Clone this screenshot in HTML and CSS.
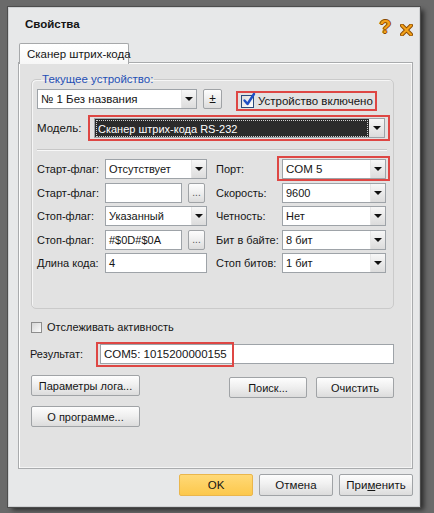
FILE: index.html
```html
<!DOCTYPE html>
<html lang="ru">
<head>
<meta charset="utf-8">
<title>Свойства</title>
<link rel="stylesheet" href="styles.css">
</head>
<body>
<div class="dialog">
  <div class="titlebar">
    <span class="title">Свойства</span>
    <span class="tools">
      <span class="help">?</span>
      <svg class="close" width="13" height="12" viewBox="0 0 13 12">
        <path d="M2 1.5 L11 10.5 M11 1.5 L2 10.5" stroke="#8a4a00" stroke-width="4" stroke-linecap="round"/>
        <path d="M2 1.5 L11 10.5 M11 1.5 L2 10.5" stroke="#f2a11a" stroke-width="2.2" stroke-linecap="round"/>
      </svg>
    </span>
  </div>

  <div class="tabs"><div class="tab">Сканер штрих-кода</div></div>

  <div class="panel">
    <fieldset class="device">
      <legend>Текущее устройство:</legend>

      <div class="row first">
        <div class="combo w-device"><span class="val">№ 1 Без названия</span><span class="arrow"></span></div>
        <button class="btn pm">±</button>
        <label class="check mark-box">
          <span class="box">
            <svg width="16" height="16" viewBox="0 0 16 16"><path d="M3.5 8.5 L6.5 12 L13 2" fill="none" stroke="#1f4fc4" stroke-width="2.4" stroke-linecap="round" stroke-linejoin="round"/></svg>
          </span>
          Устройство включено
        </label>
      </div>

      <div class="row model-row">
        <span class="lbl model-lbl">Модель:</span>
        <div class="mark-box model-mark">
          <div class="combo dark"><span class="val"><span class="focus">Сканер штрих-кода RS-232</span></span><span class="arrow"></span></div>
        </div>
      </div>

      <hr class="sep">

      <div class="grid">
        <span class="lbl">Старт-флаг:</span>
        <div class="combo"><span class="val">Отсутствует</span><span class="arrow"></span></div>
        <span class="lbl">Порт:</span>
        <div class="combo marked"><span class="val">COM 5</span><span class="arrow"></span></div>

        <span class="lbl">Старт-флаг:</span>
        <div class="pick"><span class="input"></span><button class="btn dots">...</button></div>
        <span class="lbl">Скорость:</span>
        <div class="combo"><span class="val">9600</span><span class="arrow"></span></div>

        <span class="lbl">Стоп-флаг:</span>
        <div class="combo"><span class="val">Указанный</span><span class="arrow"></span></div>
        <span class="lbl">Четность:</span>
        <div class="combo"><span class="val">Нет</span><span class="arrow"></span></div>

        <span class="lbl">Стоп-флаг:</span>
        <div class="pick"><span class="input">#$0D#$0A</span><button class="btn dots">...</button></div>
        <span class="lbl">Бит в байте:</span>
        <div class="combo"><span class="val">8 бит</span><span class="arrow"></span></div>

        <span class="lbl">Длина кода:</span>
        <span class="input">4</span>
        <span class="lbl">Стоп битов:</span>
        <div class="combo"><span class="val">1 бит</span><span class="arrow"></span></div>
      </div>
    </fieldset>

    <label class="check track"><span class="box plain"></span>Отслеживать активность</label>

    <div class="result">
      <span class="lbl">Результат:</span>
      <span class="input wide"><span class="marked-text">COM5: 1015200000155</span></span>
    </div>

    <div class="actions">
      <div class="stack">
        <button class="btn big">Параметры лога...</button>
        <button class="btn big">О программе...</button>
      </div>
      <div class="pair">
        <button class="btn mid">Поиск...</button>
        <button class="btn mid">Очистить</button>
      </div>
    </div>
  </div>

  <div class="footer">
    <button class="btn foot ok">OK</button>
    <button class="btn foot">Отмена</button>
    <button class="btn foot">При<u>м</u>енить</button>
  </div>
</div>
</body>
</html>
```

FILE: styles.css
```css
* { box-sizing: border-box; }

html, body { margin: 0; }

body {
  background: #6a6a6a;
  padding: 7px 0 0 8px;
  height: 513px;
  overflow: hidden;
  font-family: "Liberation Sans", Arial, sans-serif;
  font-size: 11px;
  color: #151515;
}

/* window frame */
.dialog {
  width: 412px;
  height: 500px;
  background: #e7e8e9;
  border: 1px solid #cfd1d3;
  box-shadow: 0 0 0 1px #4d4d4d, 4px 3px 5px rgba(0, 0, 0, 0.6);
  display: flex;
  flex-direction: column;
  padding-left: 9px;
}

.titlebar {
  height: 35px;
  display: flex;
  align-items: flex-start;
  justify-content: space-between;
  padding: 8px 6px 0 7px;
}

.title {
  font-weight: bold;
  font-size: 11.5px;
  line-height: 14px;
  margin-top: 1px;
}

.tools {
  display: flex;
  align-items: flex-start;
  gap: 9px;
}

.help {
  font-weight: bold;
  font-size: 19px;
  line-height: 18px;
  color: #f2a11a;
  text-shadow: 1px 0 0 #8a4a00, -1px 0 0 #8a4a00, 0 1px 0 #8a4a00, 0 -1px 0 #8a4a00;
  margin-top: 2px;
}

.close { margin-top: 8px; }

/* tab strip */
.tabs {
  height: 19px;
  padding-left: 1px;
  position: relative;
  z-index: 1;
}

.tab {
  width: 110px;
  height: 21px;
  border: 1px solid #a6a8aa;
  border-bottom: none;
  border-radius: 2px 2px 0 0;
  background: linear-gradient(#ffffff, #f7f7f7);
  padding: 4px 0 0 7px;
  line-height: 13px;
  white-space: nowrap;
  font-size: 11.5px;
}

.panel {
  width: 395px;
  height: 407px;
  border: 1px solid #a9abad;
  box-shadow: inset 1px 1px 0 #ffffff, inset -1px -1px 0 #f4f4f4;
  background: #e2e2e2;
  padding: 10px 0 0 12px;
}

/* device group */
.device {
  margin: 0;
  width: 363px;
  height: 236px;
  border: 1px solid #cacaca;
  box-shadow: inset 1px 1px 0 #f6f6f6;
  border-radius: 5px;
  padding: 2px 0 0 5px;
}

.device legend {
  padding: 0 1px;
  margin-left: 4px;
  color: #1f4fb5;
  line-height: 13px;
  font-size: 11.5px;
}

.row {
  display: flex;
  align-items: center;
}

.first { height: 22px; }

.lbl { white-space: nowrap; line-height: 14px; }

/* combo boxes and edits */
.combo, .input {
  height: 20px;
  background: #ffffff;
  border: 1px solid #9ea3a8;
  display: flex;
  align-items: center;
  line-height: 14px;
  white-space: nowrap;
}

.combo .val {
  flex: 1;
  padding-left: 3px;
}

.input { padding-left: 3px; }

.combo .arrow {
  width: 15px;
  height: 18px;
  background: linear-gradient(#f7f7f7, #dcdcdc);
  border-left: 1px solid #e6e6e6;
  display: flex;
  align-items: center;
  justify-content: center;
}

.combo .arrow::before {
  content: "";
  border-left: 4px solid transparent;
  border-right: 4px solid transparent;
  border-top: 4px solid #111;
}

.w-device { width: 160px; }

.w-device .val { font-size: 11.5px; }

.btn {
  font-family: inherit;
  font-size: 11px;
  color: #151515;
  margin: 0;
  padding: 0;
  border: 1px solid #a0a3a6;
  border-radius: 2px;
  background: linear-gradient(#fdfdfd 0%, #f0f0f0 45%, #dcdcdc 100%);
  line-height: 14px;
}

.pm {
  width: 19px;
  height: 20px;
  margin-left: 6px;
  font-size: 12px;
}

.check {
  display: flex;
  align-items: center;
  white-space: nowrap;
  line-height: 14px;
}

.mark-box {
  border: 2px solid #de4744;
}

.first .check {
  margin-left: 14px;
  width: 141px;
  height: 20px;
  margin-top: 4px;
  padding-left: 3px;
  font-size: 11.5px;
}

.box {
  width: 13px;
  height: 13px;
  border: 1px solid #2a4a7a;
  background: linear-gradient(135deg, #dcdcdc, #ffffff);
  margin-right: 4px;
  position: relative;
  flex: none;
}

.box svg {
  position: absolute;
  left: -1px;
  top: -4px;
}

.box.plain {
  width: 11px;
  height: 11px;
  border-color: #8d8d8d;
  background: linear-gradient(135deg, #d6d6d6, #fbfbfb);
}

.model-row {
  margin-top: 5px;
  height: 26px;
}

.model-lbl { width: 51px; font-size: 11.5px; }

.model-mark {
  width: 302px;
  height: 26px;
  padding: 1px 3px 1px 4px;
}

.combo.dark {
  width: 100%;
  background: #2b2b2b;
  color: #ffffff;
  font-size: 11px;
}

.combo.dark .val { padding-left: 2px; }

.focus {
  outline: 1px dotted #d0d0d0;
  outline-offset: 0;
  padding: 1px 2px 0 1px;
  display: block;
  margin-right: 2px;
}

.combo.dark .arrow { border-left: none; }

.sep {
  border: none;
  border-top: 1px solid #c7c7c7;
  border-bottom: 1px solid #f8f8f8;
  margin: 8px 0 0 0;
  width: 350px;
}

.grid {
  display: grid;
  grid-template-columns: 68px 102px 9px 66px 104px;
  grid-auto-rows: 20px;
  row-gap: 3.5px;
  align-items: center;
  margin-top: 8px;
}

.grid > :nth-child(4n+3) { grid-column: 4; }

.marked { position: relative; font-size: 11.5px; }

.marked::after {
  content: "";
  position: absolute;
  left: -6px;
  right: -5px;
  top: -4px;
  bottom: -3px;
  border: 2px solid #de4744;
}

.pick {
  display: flex;
  align-items: center;
}

.pick .input { width: 77px; }

.dots {
  width: 17px;
  height: 20px;
  margin-left: 6px;
  font-size: 10px;
  color: #555;
  line-height: 10px;
}

/* below the group */
.track {
  margin-top: 12px;
  height: 12px;
}

.track .box { margin-right: 5px; }

.result {
  display: flex;
  align-items: center;
  margin-top: 11px;
  margin-left: -1px;
}

.result .lbl { width: 70px; }

.input.wide {
  width: 294px;
  height: 20px;
  font-size: 11.5px;
}

.marked-text { position: relative; }

.marked-text::after {
  content: "";
  position: absolute;
  left: -8px;
  right: -7px;
  top: -5px;
  bottom: -6px;
  border: 2px solid #de4744;
}

.actions {
  display: flex;
  margin-top: 11px;
}

.stack {
  display: flex;
  flex-direction: column;
  gap: 10px;
}

.big {
  width: 109px;
  height: 21px;
}

.pair {
  display: flex;
  gap: 9px;
  margin-left: 89px;
  margin-top: 2px;
}

.mid {
  width: 78px;
  height: 21px;
}

.footer {
  display: flex;
  gap: 6px;
  width: 395px;
  justify-content: flex-end;
  margin-top: 5px;
}

.foot {
  width: 74px;
  height: 22px;
  font-size: 11.5px;
}

.ok {
  background: linear-gradient(#ffd977, #fcc84c);
  border-color: #eab64c;
}

u { text-decoration-thickness: 1px; text-underline-offset: 1px; }
```
